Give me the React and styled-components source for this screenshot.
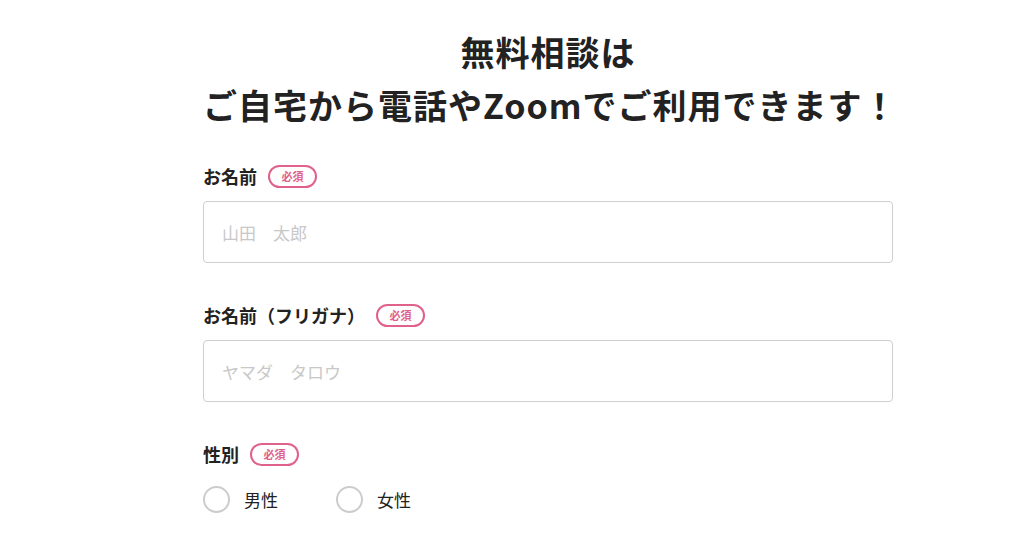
import styled, { createGlobalStyle } from 'styled-components';

const GlobalStyle = createGlobalStyle`
  body {
    margin: 0;
    background: #fff;
    color: #222;
    font-family: "Noto Sans CJK JP", "Noto Sans", sans-serif;
  }
`;

const Page = styled.div`
  width: 690px;
  margin-left: 203px;
  padding-top: 25px;
`;

const Title = styled.h1`
  margin: 0 0 33px;
  text-align: center;
  white-space: nowrap;
  font-size: 34px;
  font-weight: 700;
  line-height: 53px;
  letter-spacing: 1px;
  color: #222;
`;

const Field = styled.div`
  margin-bottom: 40px;
`;

const LabelRow = styled.div`
  display: flex;
  align-items: center;
  gap: 11px;
  height: 24px;
  margin-bottom: 13px;
`;

const Label = styled.span`
  font-size: 18px;
  font-weight: 700;
  color: #222;
`;

const Required = styled.span`
  display: inline-flex;
  align-items: center;
  justify-content: center;
  box-sizing: border-box;
  width: 49px;
  height: 23px;
  border: 2px solid #e06189;
  border-radius: 12px;
  color: #e06189;
  font-size: 11px;
  font-weight: 700;
  line-height: 1;
`;

const Input = styled.input`
  display: block;
  box-sizing: border-box;
  width: 100%;
  height: 62px;
  padding: 0 18px;
  border: 1px solid #cfcfcf;
  border-radius: 4px;
  font-family: inherit;
  font-size: 17px;
  color: #222;
  outline: none;
  &::placeholder {
    color: #c8c8c8;
  }
`;

const RadioGroup = styled.div`
  display: flex;
  margin-top: 20px;
`;

const RadioLabel = styled.label`
  display: flex;
  align-items: center;
  width: 133px;
  font-size: 17px;
  color: #222;
`;

const Circle = styled.span`
  box-sizing: border-box;
  width: 27px;
  height: 27px;
  border: 2px solid #cccccc;
  border-radius: 50%;
  margin-right: 14px;
`;

const App = () => (
  <>
    <GlobalStyle />
    <Page>
      <Title>
        無料相談は
        <br />
        ご自宅から電話やZoomでご利用できます！
      </Title>

      <Field>
        <LabelRow>
          <Label>お名前</Label>
          <Required>必須</Required>
        </LabelRow>
        <Input placeholder="山田　太郎" />
      </Field>

      <Field>
        <LabelRow>
          <Label>お名前（フリガナ）</Label>
          <Required>必須</Required>
        </LabelRow>
        <Input placeholder="ヤマダ　タロウ" />
      </Field>

      <Field>
        <LabelRow>
          <Label>性別</Label>
          <Required>必須</Required>
        </LabelRow>
        <RadioGroup>
          <RadioLabel>
            <Circle />
            男性
          </RadioLabel>
          <RadioLabel>
            <Circle />
            女性
          </RadioLabel>
        </RadioGroup>
      </Field>
    </Page>
  </>
);

export default App;
